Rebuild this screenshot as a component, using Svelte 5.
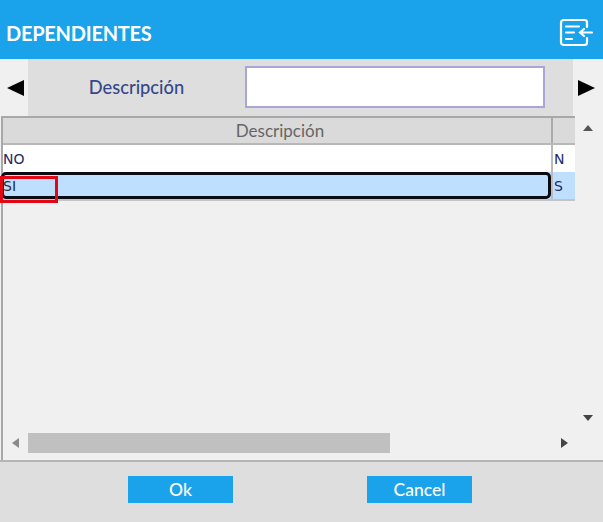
<script>
  const rows = [
    { id: 'no', text: 'NO', short: 'N', selected: false },
    { id: 'si', text: 'SI', short: 'S', selected: true }
  ];
</script>

<div class="page">
  <header class="top">
    <h1>DEPENDIENTES</h1>
    <svg class="ico" width="34" height="30" viewBox="0 0 34 30" fill="none" stroke="#fff" stroke-linecap="round">
      <path d="M28 9V4.500Q28 2 25.500 2H5Q2 2 2 5V24Q2 27 5 27H25.500Q28 27 28 24.500V20" stroke-width="2.200" />
      <path d="M7 8.500H20M7 14.500H15M7 21H13" stroke-width="2.200" />
      <path d="M33 14.500H21M25 11L21 14.500L25 18" stroke-width="2.200" />
    </svg>
  </header>

  <section class="filter">
    <div class="nav"><span class="tri left"></span></div>
    <div class="band">
      <span class="lbl">Descripción</span>
      <input class="inp" type="text" aria-label="Descripción" />
    </div>
    <div class="nav"><span class="tri right"></span></div>
  </section>

  <section class="grid">
    <div class="main">
      <div class="head">
        <div class="col1">Descripción</div>
        <div class="col2"></div>
      </div>
      {#each rows as r (r.id)}
        <div class="row" class:sel={r.selected}>
          <div class="col1 cell"><span>{r.text}</span></div>
          <div class="col2 cell">{r.short}</div>
          {#if r.selected}<span class="focus"></span><span class="mark"></span>{/if}
        </div>
      {/each}
      <div class="empty"></div>
      <div class="hbar">
        <span class="sm left-s"></span>
        <div class="track"><div class="thumb"></div></div>
        <span class="sm right-s"></span>
      </div>
    </div>
    <div class="vbar">
      <span class="sv up"></span>
      <span class="sv down"></span>
    </div>
  </section>

  <footer class="foot">
    <button class="btn">Ok</button>
    <button class="btn">Cancel</button>
  </footer>
</div>

<style>
  :global(body) { margin: 0; background: #f0f0f0; }
  .page {
    width: 603px; height: 522px; display: flex; flex-direction: column;
    font-family: Lato, "Liberation Sans", sans-serif; overflow: hidden; background: #f0f0f0;
  }
  .top {
    height: 59px; flex: none; background: #1aa3ea; display: flex; align-items: center;
    justify-content: space-between; padding: 7px 10px 0 6px; box-sizing: border-box;
  }
  h1 { margin: 0; color: #fff; font-size: 20px; font-weight: 700; letter-spacing: -0.25px; }
  .ico { display: block; margin-top: 0; }
  .filter { height: 57px; flex: none; display: flex; }
  .nav { width: 28px; flex: none; display: flex; align-items: center; justify-content: center; background: #f0f0f0; }
  .nav:last-child { width: 30px; }
  .tri { width: 0; height: 0; border-top: 8px solid transparent; border-bottom: 8px solid transparent; }
  .tri.left { border-right: 17px solid #000; margin-left: 3px; }
  .tri.right { border-left: 17px solid #000; margin-right: 4px; }
  .band { flex: 1; background: #dedede; display: flex; align-items: center; }
  .lbl { width: 217px; text-align: center; color: #34488a; font-size: 18.300px; font-weight: 500; margin-top: -1px; }
  .inp {
    width: 300px; height: 42px; box-sizing: border-box; margin: -2px 0 0 0; padding: 0;
    border: 2px solid #a9a5d6; background: #fff; outline: none; border-radius: 0;
  }
  .grid { height: 344px; flex: none; display: flex; padding-left: 1px; box-sizing: border-box; }
  .main {
    width: 574px; flex: none; box-sizing: border-box; border-left: 2px solid #a8a8a8; border-top: 2px solid #a8a8a8;
    display: flex; flex-direction: column;
  }
  .head { height: 25px; flex: none; display: flex; background: #dadada; border-bottom: 2px solid #b8b8b8; box-sizing: content-box; color: #666; font-size: 17px; }
  .col1 { width: 550px; flex: none; box-sizing: border-box; }
  .col2 { flex: 1; }
  .head .col1 { text-align: center; line-height: 26px; border-right: 2px solid #aaa; padding-left: 6px; }
  .row { position: relative; height: 27px; flex: none; display: flex; background: #fff; color: #222a66; font-family: "DejaVu Sans", sans-serif; font-size: 14px; }
  .row.sel { background: #bfdfff; border-bottom: 2px solid #c4c4c4; box-sizing: content-box; }
  .row.sel .col1 { color: #2a2a30; }
  .cell { line-height: 29px; height: 27px; }
  .col1.cell { border-right: 2px solid #bbb; }
  .col2.cell { padding-left: 1px; }
  .focus {
    position: absolute; left: -2px; top: 0; width: 550px; height: 27px; box-sizing: border-box;
    border: 3px solid #0b0b14; border-radius: 5px; pointer-events: none;
  }
  .mark {
    position: absolute; left: -3px; top: 4px; width: 58px; height: 27px; box-sizing: border-box;
    border: 3px solid #e30613; pointer-events: none;
  }
  .empty { flex: 1; }
  .hbar { height: 20px; flex: none; display: flex; align-items: center; margin-bottom: 7px; }
  .track { flex: 1; height: 20px; padding-left: 9px; }
  .thumb { width: 362px; height: 20px; background: #c0c0c0; }
  .sm { width: 0; height: 0; flex: none; border-top: 5.500px solid transparent; border-bottom: 5.500px solid transparent; }
  .left-s { border-right: 7px solid #8a8a8a; margin-left: 9px; }
  .right-s { border-left: 7px solid #444; margin-right: 7px; }
  .vbar { flex: 1; display: flex; flex-direction: column; justify-content: space-between; align-items: center; padding: 9px 0 39px; box-sizing: border-box; }
  .sv { width: 0; height: 0; border-left: 5.500px solid transparent; border-right: 5.500px solid transparent; margin-right: 2px; }
  .sv.up { border-bottom: 6px solid #555; }
  .sv.down { border-top: 6px solid #444; }
  .foot {
    flex: 1; background: #dedede; border-top: 2px solid #b4b4b4; display: flex; padding: 14px 0 0 128px; gap: 134px;
    align-items: flex-start; box-sizing: border-box;
  }
  .btn {
    width: 105px; height: 27px; border: none; background: #1aa3ea; color: #fff; font-family: inherit;
    font-size: 17.500px; font-weight: 500; padding: 0; border-radius: 0;
  }
</style>
